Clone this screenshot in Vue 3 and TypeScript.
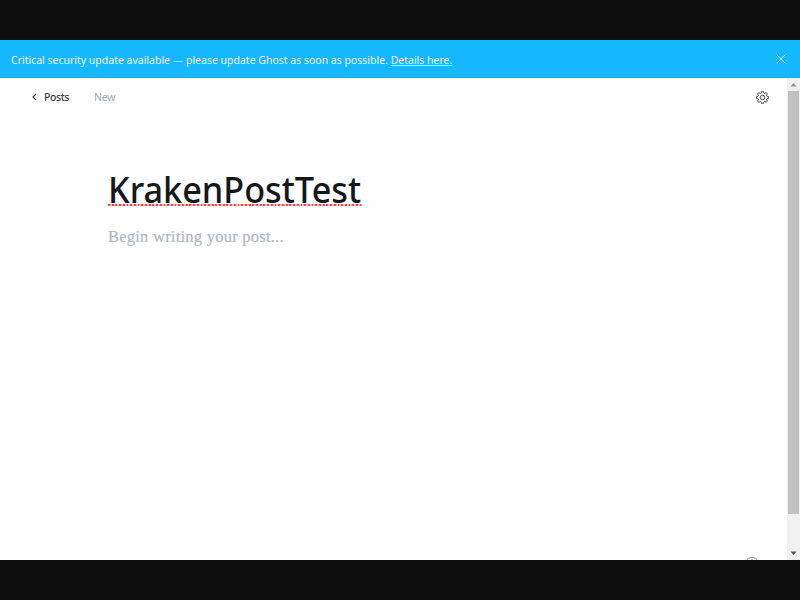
<script setup lang="ts">
import { ref } from 'vue'

const title = ref('KrakenPostTest')
const alertOpen = ref(true)
const teeth = Array.from({ length: 8 }, (_, i) => i * 45)
const gearPath = teeth
  .map((deg, i) => {
    const point = (r: number, offset: number) => {
      const a = ((deg + offset - 90) * Math.PI) / 180
      return `${(7 + r * Math.cos(a)).toFixed(2)} ${(7 + r * Math.sin(a)).toFixed(2)}`
    }
    return `${i === 0 ? 'M' : 'L'}${point(5.1, -14)}L${point(6.5, -10)}Q${point(6.7, 0)} ${point(6.5, 10)}L${point(5.1, 14)}Q${point(4.3, 22.5)} ${point(5.1, 31)}`
  })
  .join('') + 'Z'
</script>

<template>
  <div class="frame">
    <div class="app">
      <aside v-if="alertOpen" class="alert">
        <p class="message">Critical security update available <span class="dash">—</span> please update Ghost as soon as possible. <a class="details" href="#">Details here.</a></p>
        <button class="close" aria-label="Close" @click="alertOpen = false">
          <svg width="10" height="10" viewBox="0 0 10 10"><path d="M.6.6l8.8 8.8M9.4.6L.6 9.4" /></svg>
        </button>
      </aside>
      <div class="body">
        <main class="editor">
          <header class="toolbar">
            <a class="back" href="#">
              <svg width="5" height="8" viewBox="0 0 5 8"><path d="M4 1L1 4l3 3" /></svg>
              <span class="posts">Posts</span>
            </a>
            <span class="status">New</span>
            <button class="settings" aria-label="Settings">
              <svg width="13" height="13" viewBox="0 0 14 14"><path :d="gearPath" /><circle cx="7" cy="7" r="2.4" /></svg>
            </button>
          </header>
          <h1 class="title"><span class="word">{{ title }}</span></h1>
          <p class="placeholder">Begin writing your post...</p>
          <div class="help">
            <svg width="12" height="12" viewBox="0 0 12 12"><rect x=".6" y=".6" width="10.8" height="10.8" rx="4" /><path d="M4.3 4.8c0-2.3 3.4-2.3 3.4 0C7.7 6 6 6 6 7.3M6 8.8v.7" /></svg>
          </div>
        </main>
        <div class="scrollbar">
          <svg class="up" width="13" height="13" viewBox="0 0 13 13"><path d="M3.5 8.5h6L6.5 5z" /></svg>
          <div class="thumb"></div>
          <svg class="down" width="13" height="13" viewBox="0 0 13 13"><path d="M3.5 4.5h6L6.5 8z" /></svg>
        </div>
      </div>
    </div>
  </div>
</template>

<style>
body { margin: 0; background: #0e0e0e; }
</style>

<style scoped>
* { box-sizing: border-box; }
.frame { height: 600px; padding: 40px 0; background: #0e0e0e; font-family: "Noto Sans", sans-serif; overflow: hidden; }
.app { height: 520px; display: flex; flex-direction: column; background: #fff; overflow: hidden; }
.alert { flex: 0 0 38px; display: flex; align-items: center; justify-content: space-between; padding: 0 14px 0 11px; background: #15b8ff; border-bottom: 1px solid #14aeef; color: #e7f7ff; }
.message { margin: 0; font-size: 11.5px; line-height: 16px; white-space: nowrap; padding-top: 2px; transform: scaleX(.912); transform-origin: left; }
.dash { opacity: .6; }
.details { color: inherit; text-decoration: underline; text-underline-offset: 1px; }
button { display: flex; padding: 0; border: 0; background: none; }
.close svg { stroke: #c9efff; stroke-width: 1; fill: none; }
.body { flex: 1; display: flex; min-height: 0; }
.editor { flex: 1; display: flex; flex-direction: column; min-width: 0; overflow: hidden; }
.toolbar { flex: 0 0 38px; display: flex; align-items: center; padding: 0 18px 0 32px; font-size: 10.5px; letter-spacing: -.25px; }
.back { display: flex; align-items: center; gap: 7px; color: #343f44; text-decoration: none; }
.back svg { fill: none; stroke: #343f44; stroke-width: 1.1; }
.posts { font-weight: 500; letter-spacing: -.4px; }
.status { margin-left: 25px; color: #9baab8; }
.settings { margin-left: auto; }
.settings svg { fill: none; stroke: #343f44; stroke-width: 1; }
.title { margin: 48px 0 0 108px; font-size: 37px; line-height: 50px; font-weight: 500; color: #15171a; white-space: nowrap; }
.word { display: inline-block; height: 42px; line-height: 49px; transform: scaleX(.9255); transform-origin: left; background: repeating-linear-gradient(90deg, #f44 0 2px, #fbb 2px 4px) left bottom / 100% 2px no-repeat; }
.placeholder { margin: 11px 0 0 108px; font-family: "Liberation Serif", serif; font-size: 16.5px; letter-spacing: .24px; line-height: 24px; color: #aeb9c5; -webkit-text-stroke: .2px #aeb9c5; white-space: nowrap; }
.help { margin: auto 29px -9px auto; height: 12px; }
.help svg { display: block; fill: none; stroke: #8594a1; stroke-width: 1; }
.scrollbar { flex: 0 0 13px; display: flex; flex-direction: column; background: #f0f0f0; }
.scrollbar svg { display: block; }
.up { fill: #909090; }
.down { fill: #505050; margin-top: auto; }
.thumb { height: 423px; margin: 0 1px; background: #c1c1c1; }
</style>
